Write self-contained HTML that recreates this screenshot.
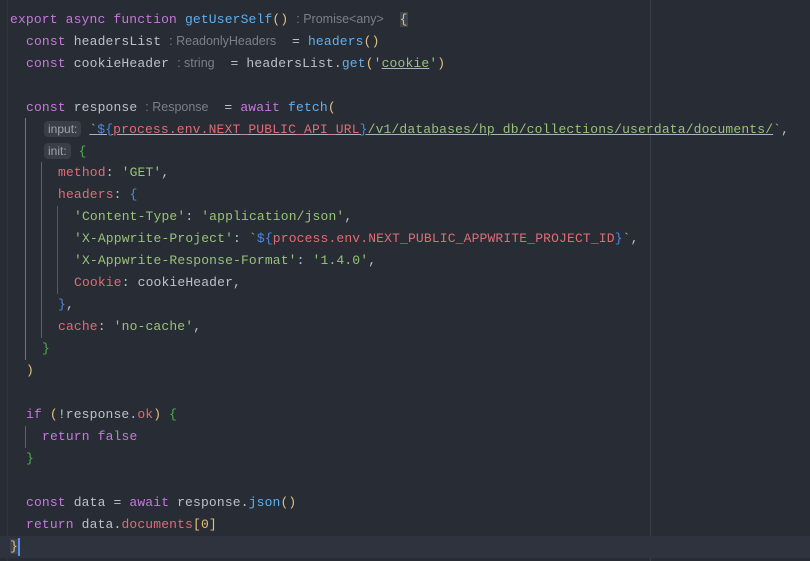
<!DOCTYPE html>
<html><head><meta charset="utf-8"><style>
html,body{margin:0;padding:0;background:#282c34;width:810px;height:561px;overflow:hidden}
.l{position:absolute;height:22px;line-height:22px;white-space:pre;font-family:"Liberation Mono",monospace;font-size:13px;letter-spacing:0.15px;color:#bbc1cb}
.k{color:#c678dd}.f{color:#61afef}.s{color:#98c379}.p{color:#e06c75}.y{color:#e5c07b}.g{color:#4fae4f}.b{color:#4a8ae0}
.h{font-family:"Liberation Sans",sans-serif;font-size:12.5px;color:#7a808a;letter-spacing:0}
.bd{font-family:"Liberation Sans",sans-serif;font-size:12px;color:#9da3ad;background:#3a3e46;border-radius:4px;padding:1px 4px;letter-spacing:0}
.u{text-decoration:underline;text-decoration-color:#abb2bf}
.v{position:absolute;width:1px}
</style></head><body>
<div class="v" style="left:650px;top:0;height:561px;background:#3a3f4a"></div>
<div class="v" style="left:7px;top:0;height:561px;background:#30343c"></div>
<div style="position:absolute;left:0;top:536px;width:810px;height:22px;background:#2f333d"></div>
<div class="v" style="left:25px;top:118px;height:242px;background:#8a7a2a"></div>
<div class="v" style="left:41px;top:162px;height:176px;background:#3f7a3a"></div>
<div class="v" style="left:57px;top:206px;height:88px;background:#2c62a0"></div>
<div class="v" style="left:25px;top:426px;height:22px;background:#3f7a3a"></div>

<div class="l" style="top:8px;left:10px"><span class="k">export async function</span> <span class="f">getUserSelf</span><span class="y">()</span> <span class="h">: Promise&lt;any&gt;</span>  <span class="y" style="background:#3e434d">{</span></div>
<div class="l" style="top:30px;left:26px"><span class="k">const</span> headersList <span class="h">: ReadonlyHeaders</span>  = <span class="f">headers</span><span class="y">()</span></div>
<div class="l" style="top:52px;left:26px"><span class="k">const</span> cookieHeader <span class="h">: string</span>  = headersList.<span class="f">get</span><span class="y">(</span><span class="s">'<span class="u">cookie</span>'</span><span class="y">)</span></div>
<div class="l" style="top:96px;left:26px"><span class="k">const</span> response <span class="h">: Response</span>  = <span class="k">await</span> <span class="f">fetch</span><span class="y">(</span></div>
<div class="l" style="top:118px;left:44px"><span class="bd">input:</span> <span class="s u">`<span class="b">${</span><span class="p">process.env.NEXT_PUBLIC_API_URL</span><span class="b">}</span>/v1/databases/hp_db/collections/userdata/documents/</span><span class="s">`</span>,</div>
<div class="l" style="top:140px;left:44px"><span class="bd">init:</span> <span class="g">{</span></div>
<div class="l" style="top:162px;left:58px"><span class="p">method</span>: <span class="s">'GET'</span>,</div>
<div class="l" style="top:184px;left:58px"><span class="p">headers</span>: <span class="b">{</span></div>
<div class="l" style="top:206px;left:74px"><span class="s">'Content-Type'</span>: <span class="s">'application/json'</span>,</div>
<div class="l" style="top:228px;left:74px"><span class="s">'X-Appwrite-Project'</span>: <span class="s">`</span><span class="b">${</span><span class="p">process.env.NEXT_PUBLIC_APPWRITE_PROJECT_ID</span><span class="b">}</span><span class="s">`</span>,</div>
<div class="l" style="top:250px;left:74px"><span class="s">'X-Appwrite-Response-Format'</span>: <span class="s">'1.4.0'</span>,</div>
<div class="l" style="top:272px;left:74px"><span class="p">Cookie</span>: cookieHeader,</div>
<div class="l" style="top:294px;left:58px"><span class="b">}</span>,</div>
<div class="l" style="top:316px;left:58px"><span class="p">cache</span>: <span class="s">'no-cache'</span>,</div>
<div class="l" style="top:338px;left:42px"><span class="g">}</span></div>
<div class="l" style="top:360px;left:26px"><span class="y">)</span></div>
<div class="l" style="top:404px;left:26px"><span class="k">if</span> <span class="y">(</span>!response.<span class="p">ok</span><span class="y">)</span> <span class="g">{</span></div>
<div class="l" style="top:426px;left:42px"><span class="k">return false</span></div>
<div class="l" style="top:448px;left:26px"><span class="g">}</span></div>
<div class="l" style="top:492px;left:26px"><span class="k">const</span> data = <span class="k">await</span> response.<span class="f">json</span><span class="y">()</span></div>
<div class="l" style="top:514px;left:26px"><span class="k">return</span> data.<span class="p">documents</span><span class="y">[0]</span></div>
<div class="l" style="top:536px;left:10px"><span class="y" style="background:#3e434d">}</span></div>
<div class="v" style="left:18px;top:538px;height:18px;width:2px;background:#5b8ef0"></div>
</body></html>
